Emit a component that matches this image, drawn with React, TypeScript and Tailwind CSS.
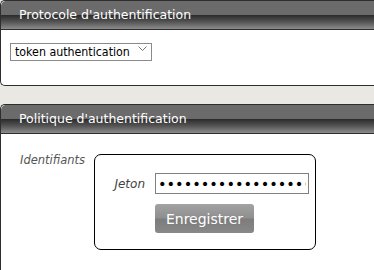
import React, { useState } from 'react';

const headerBg =
    'bg-[linear-gradient(to_bottom,#6b6b6b_0px,#6b6b6b_14px,#2a2a2a_14px,#555_21px,#8c8c8c_28px)]';

const PanelHeader: React.FC<{ title: string }> = ({ title }) => (
    <div className={`h-[29px] ${headerBg} border-b border-[#2e2e2e] rounded-tl-[5px] flex items-center pl-[18px]`}>
        <span className="text-white text-[12.5px] leading-none pt-[1px]">{title}</span>
    </div>
);

export default function App() {
    const [protocol, setProtocol] = useState('token');
    const [token, setToken] = useState('abcdefghijklmnopqrstuvwxyz');

    return (
        <div
            className="w-[374px] h-[270px] overflow-hidden bg-[#eae8e3]"
            style={{ fontFamily: '"DejaVu Sans", Verdana, sans-serif' }}
        >
            <section className="w-[400px] h-[86px] bg-white border border-[#2e2e2e] border-r-0 rounded-l-[5px] flex flex-col">
                <PanelHeader title="Protocole d'authentification" />
                <div className="pl-[9px] pt-[9px]">
                    <div className="relative w-[142px] h-[18px]">
                        <select
                            value={protocol}
                            onChange={(e) => setProtocol(e.target.value)}
                            className="w-full h-full border border-[#8a8a8a] bg-white text-[12.3px] leading-none text-black pl-[4px] appearance-none outline-none font-['DejaVu_Sans_Condensed',sans-serif]"
                        >
                            <option value="token">token authentication</option>
                            <option value="password">password authentication</option>
                        </select>
                        <svg
                            className="absolute right-[5px] top-[7px] pointer-events-none"
                            width="9"
                            height="5"
                            viewBox="0 0 9 5"
                            fill="none"
                            stroke="#777"
                            strokeWidth="1"
                        >
                            <path d="M0.5 0.5 L4.5 4.5 L8.5 0.5" />
                        </svg>
                    </div>
                </div>
            </section>

            <section className="mt-[18px] w-[400px] h-[170px] bg-white border border-[#2e2e2e] border-r-0 rounded-l-[5px] flex flex-col">
                <PanelHeader title="Politique d'authentification" />
                <div className="flex pt-[18px]">
                    <div className="w-[93px] pl-[19px] text-[11.5px] italic text-[#555]">Identifiants</div>
                    <div className="mt-[2px] w-[222px] h-[96px] border border-black rounded-[7px] flex flex-col">
                        <div className="flex items-center mt-[18px]">
                            <label className="w-[50px] text-right text-[12px] italic text-[#444]">Jeton</label>
                            <input
                                type="password"
                                value={token}
                                onChange={(e) => setToken(e.target.value)}
                                className="ml-[10px] w-[154px] h-[21px] border border-[#808080] px-[2px] text-[14.5px] leading-none text-black outline-none"
                            />
                        </div>
                        <button className="ml-[60px] mt-[10px] w-[99px] h-[29px] rounded-[3px] bg-[linear-gradient(to_bottom,#a2a2a2_0px,#8f8f8f_14px,#7c7c7c_15px,#888_29px)] text-white text-[14px] leading-none">
                            Enregistrer
                        </button>
                    </div>
                </div>
            </section>
        </div>
    );
}
